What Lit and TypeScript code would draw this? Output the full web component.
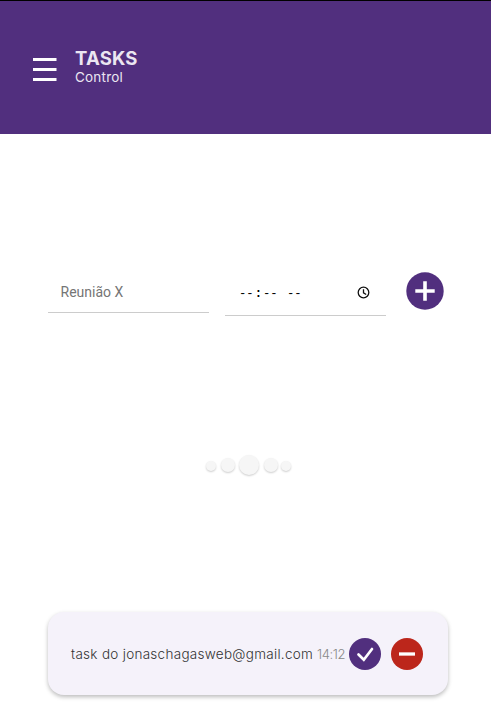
import { LitElement, html, css } from "lit";
import { customElement } from "lit/decorators.js";

@customElement("app-root")
export class AppRoot extends LitElement {
  static styles = css`
    :host { display: block; box-sizing: border-box; width: 100%; height: 723px; overflow: hidden; background: #fff; font-family: Inter, "Liberation Sans", sans-serif; }
    * { box-sizing: border-box; }
    svg { display: block; flex: none; }
    header { height: 134px; border-top: 1px solid #000; background: #512f7e; display: flex; padding: 47px 0 0 33px; color: #ebe6f1; }
    .menu { margin: 10px 18px 0 0; }
    h1 { margin: 0; font-size: 18.5px; line-height: 20px; font-weight: 700; letter-spacing: 0.2px; }
    .sub { font-size: 13.5px; line-height: 18px; letter-spacing: 0.2px; }
    .form { display: flex; align-items: flex-start; padding: 138px 0 0 48px; height: 320px; }
    .field { width: 161px; border-bottom: 1px solid #ccc; display: flex; align-items: center; }
    .name { height: 41px; padding: 0 0 0 12.5px; font: 14px Roboto, sans-serif; color: #757575; }
    .time { height: 44px; margin: 0 20px 0 16px; padding: 0 16.5px 3px 13px; justify-content: space-between; color: #000; }
    .digits { display: flex; white-space: pre; font: 12.2px "Liberation Mono", monospace; margin-top: 3px; }
    .digits span { padding: 0 1px; }
    .loader { height: 22px; display: flex; align-items: center; padding-left: 206px; }
    .dot { border-radius: 50%; background: #f6f6f6; box-shadow: 0 1px 2px #0003; }
    .s { width: 10px; height: 10px; margin: 2px 5px 0 0; }
    .m { width: 14px; height: 14px; margin-right: 4px; }
    .l { width: 20px; height: 20px; margin-right: 5px; }
    .m + .s { margin-left: -1px; }
    .task { height: 83px; width: 400px; margin: 136px 0 0 48px; border-radius: 16px; background: #f5f2fa; box-shadow: 0 2px 4px #0004; display: flex; align-items: center; padding-left: 23px; white-space: nowrap; }
    .label { width: 246px; color: #333; font-size: 13.5px; font-weight: 300; letter-spacing: 0.29px; }
    .clock { width: 32px; color: #888; font-size: 13px; font-weight: 300; letter-spacing: -0.4px; }
    .del { margin-left: 10px; }
  `;
  render() {
    return html`
      <header>
        <svg class="menu" width="24" height="24" viewBox="0 0 24 24"><path d="M0 1.5h23.5M0 11.5h23.5M0 21.5h23.5" stroke="#fff" stroke-width="3" /></svg>
        <div><h1>TASKS</h1><div class="sub">Control</div></div>
      </header>
      <section class="form">
        <div class="field name">Reunião X</div>
        <div class="field time">
          <div class="digits"><span>--</span><b>:</b><span>--</span><i> </i><span>--</span></div>
          <svg width="13" height="13" viewBox="0 0 13 13" fill="none" stroke="#111" stroke-width="1.3"><circle cx="6.5" cy="6.5" r="5.3" /><path d="M6.5 3.2v3.6l2.7 1.7" /></svg>
        </div>
        <svg width="38" height="38" viewBox="0 0 38 38"><circle cx="19" cy="19" r="18.7" fill="#512f7e" /><path d="M9.3 19h19.4M19 9.3v19.4" stroke="#fff" stroke-width="3.6" /></svg>
      </section>
      <div class="loader">
        <i class="dot s"></i><i class="dot m"></i><i class="dot l"></i><i class="dot m"></i><i class="dot s"></i>
      </div>
      <article class="task">
        <span class="label">task do jonaschagasweb@gmail.com</span>
        <span class="clock">14:12</span>
        <svg width="32" height="32" viewBox="0 0 32 32"><circle cx="16" cy="16" r="16" fill="#512f7e" /><path d="M9.5 16.5l5.3 5.3L23 11" fill="none" stroke="#fff" stroke-width="2.7" stroke-linecap="round" /></svg>
        <svg class="del" width="32" height="32" viewBox="0 0 32 32"><circle cx="16" cy="16" r="16" fill="#bc261b" /><path d="M8 16h16" stroke="#fff" stroke-width="3.3" /></svg>
      </article>
    `;
  }
}
